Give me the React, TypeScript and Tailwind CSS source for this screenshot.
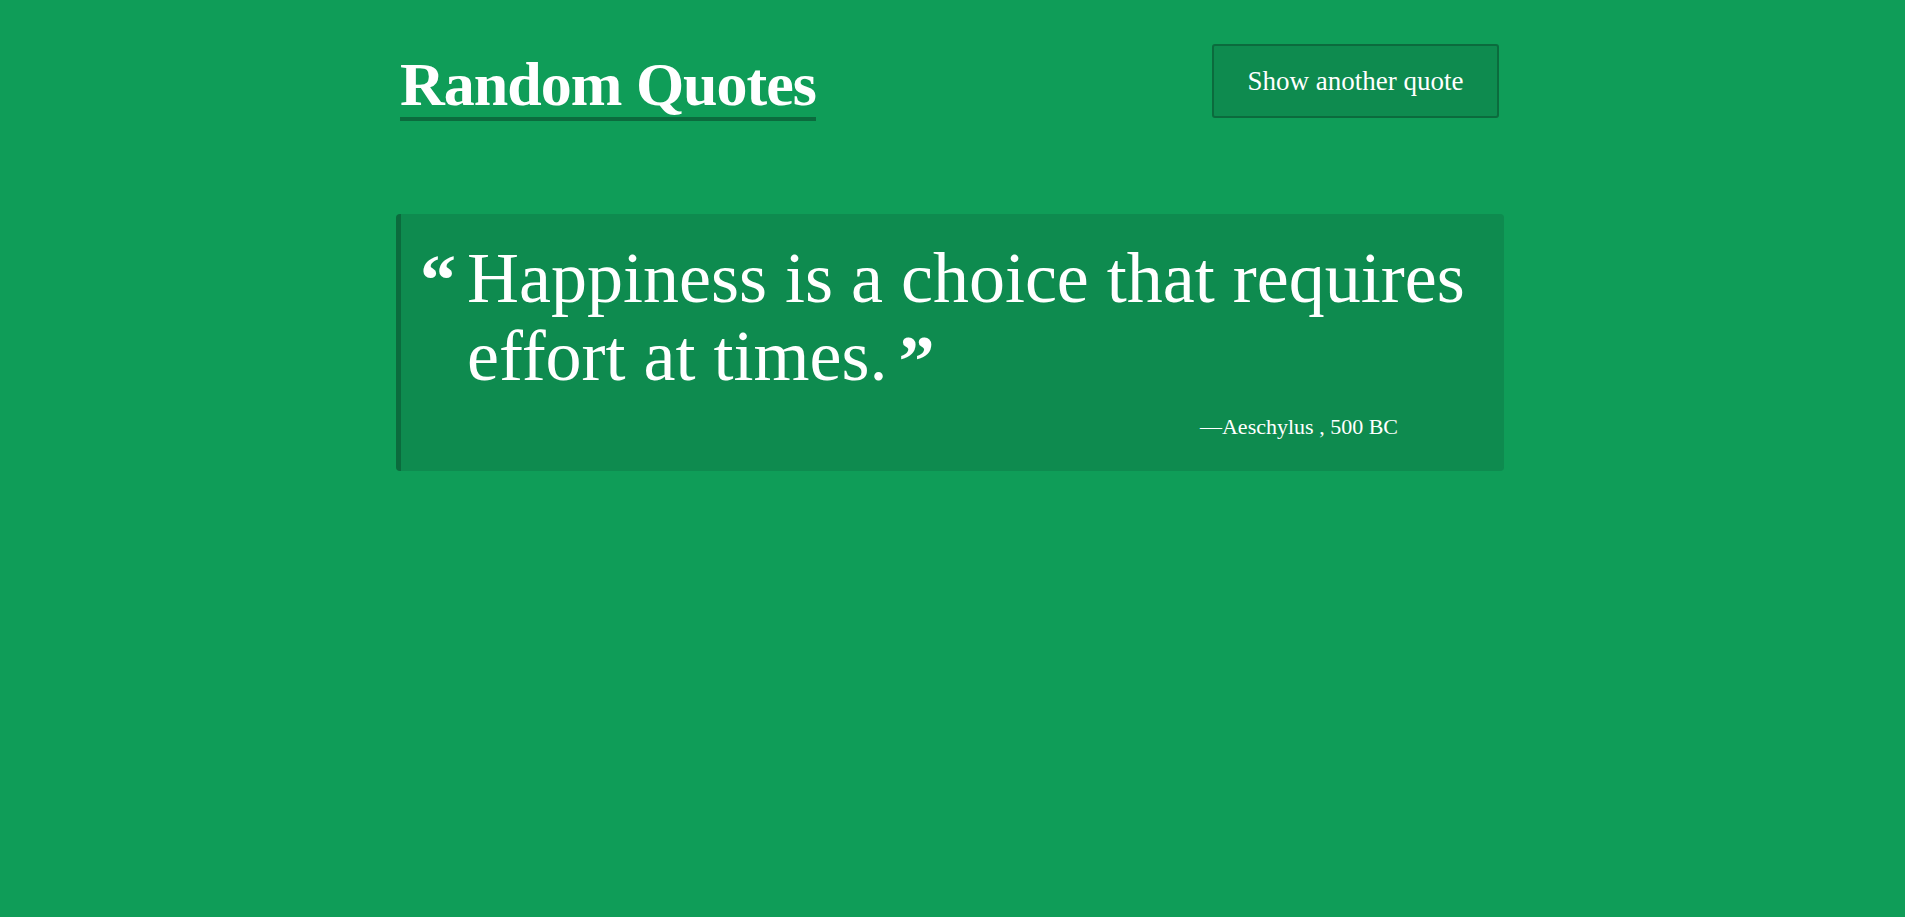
import React from "react";

const quote = {
    text: "Happiness is a choice that requires effort at times.",
    author: "Aeschylus",
    year: "500 BC",
};

export default function App() {
    return (
        <div className="min-h-screen w-full bg-[#0f9d58] text-white font-['Liberation_Serif',serif]">
            <div className="w-[1113px] mx-auto">
                <div className="w-[1108px]">
                    <header className="flex justify-between items-start pt-[44px]">
                        <h1 className="ml-[4px] mt-[7px] text-[62px] leading-[66px] font-bold tracking-[-1px] border-b-4 border-[#0b6b3d]">
                            Random Quotes
                        </h1>
                        <button className="mr-[5px] w-[287px] h-[74px] flex items-center justify-center bg-[#0e8b4f] border-2 border-[#0b6b3d] rounded-[3px] text-[27px] text-white">
                            Show another quote
                        </button>
                    </header>

                    <blockquote className="mt-[93px] bg-[#0e8b4f] border-l-[5px] border-[#0b6b3d] rounded-[4px] pt-[25px] pb-[32px] pl-[19px] pr-[20px]">
                        <div className="flex">
                            <span className="w-[47px] shrink-0 mt-[5px] text-[72px] leading-none font-bold">“</span>
                            <p className="flex-1 text-[72px] leading-[78px]">
                                {quote.text}{" "}
                                <span className="inline-block align-top -ml-[7px] mt-[8px] text-[72px] leading-none font-bold">”</span>
                            </p>
                        </div>
                        <div className="mt-[18px] pr-[86px] text-right text-[22px] leading-[24px]">
                            —{quote.author} , {quote.year}
                        </div>
                    </blockquote>
                </div>
            </div>
        </div>
    );
}
